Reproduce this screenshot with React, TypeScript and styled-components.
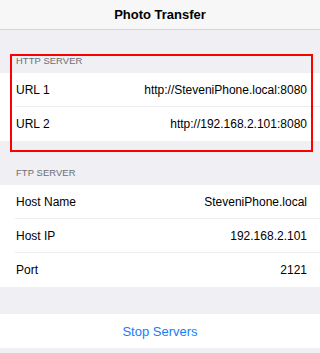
import React from "react";
import styled, { createGlobalStyle } from "styled-components";

const Global = createGlobalStyle`
  html, body { margin: 0; padding: 0; background: #efeff4; }
  body { font-family: "Liberation Sans", Arial, sans-serif; -webkit-font-smoothing: antialiased; }
`;

const Screen = styled.div`
  position: relative;
  width: 320px;
  height: 353px;
  background: #efeff4;
  overflow: hidden;
  display: flex;
  flex-direction: column;
`;

const NavBar = styled.header`
  height: 29px;
  border-bottom: 1px solid #d6d6da;
  background: #f7f7f7;
  display: flex;
  align-items: center;
  justify-content: center;
  font-weight: 700;
  font-size: 13px;
  color: #000;
`;

const SectionHeader = styled.div<{ $top: number }>`
  padding: ${(p) => p.$top}px 16px 6px;
  font-size: 9.4px;
  line-height: 12px;
  color: #6d6d72;
  letter-spacing: 0.1px;
`;

const Group = styled.div`
  background: #fff;
  display: flex;
  flex-direction: column;
`;

const Row = styled.div<{ $sep?: boolean }>`
  position: relative;
  height: 34px;
  display: flex;
  align-items: center;
  justify-content: space-between;
  padding: 0 13px 0 16px;
  font-size: 12px;
  color: #000;
  &::after {
    content: "";
    display: ${(p) => (p.$sep ? "block" : "none")};
    position: absolute;
    left: 15px;
    right: 0;
    bottom: 0;
    height: 1px;
    background: #ececef;
  }
`;

const Label = styled.span``;
const Value = styled.span``;

const Spacer = styled.div<{ $h: number }>`
  height: ${(p) => p.$h}px;
`;

const ButtonRow = styled.button`
  height: 34px;
  border: none;
  background: #fff;
  color: #1a7cf5;
  font-family: "Liberation Sans", Arial, sans-serif;
  font-size: 13px;
  padding: 0;
  display: flex;
  align-items: center;
  justify-content: center;
`;

const Highlight = styled.div`
  position: absolute;
  left: 10px;
  top: 54px;
  width: 299px;
  height: 94px;
  border: 2px solid #ff0000;
  pointer-events: none;
`;

const http = [
  ["URL 1", "http://SteveniPhone.local:8080"],
  ["URL 2", "http://192.168.2.101:8080"],
];
const ftp = [
  ["Host Name", "SteveniPhone.local"],
  ["Host IP", "192.168.2.101"],
  ["Port", "2121"],
];

export default function App() {
  return (
    <Screen>
      <Global />
      <NavBar>Photo Transfer</NavBar>
      <SectionHeader $top={25}>HTTP SERVER</SectionHeader>
      <Group>
        {http.map(([l, v], i) => (
          <Row key={l} $sep={i < http.length - 1}>
            <Label>{l}</Label>
            <Value>{v}</Value>
          </Row>
        ))}
      </Group>
      <SectionHeader $top={26}>FTP SERVER</SectionHeader>
      <Group>
        {ftp.map(([l, v], i) => (
          <Row key={l} $sep={i < ftp.length - 1}>
            <Label>{l}</Label>
            <Value>{v}</Value>
          </Row>
        ))}
      </Group>
      <Spacer $h={27} />
      <ButtonRow>Stop Servers</ButtonRow>
      <Highlight />
    </Screen>
  );
}
